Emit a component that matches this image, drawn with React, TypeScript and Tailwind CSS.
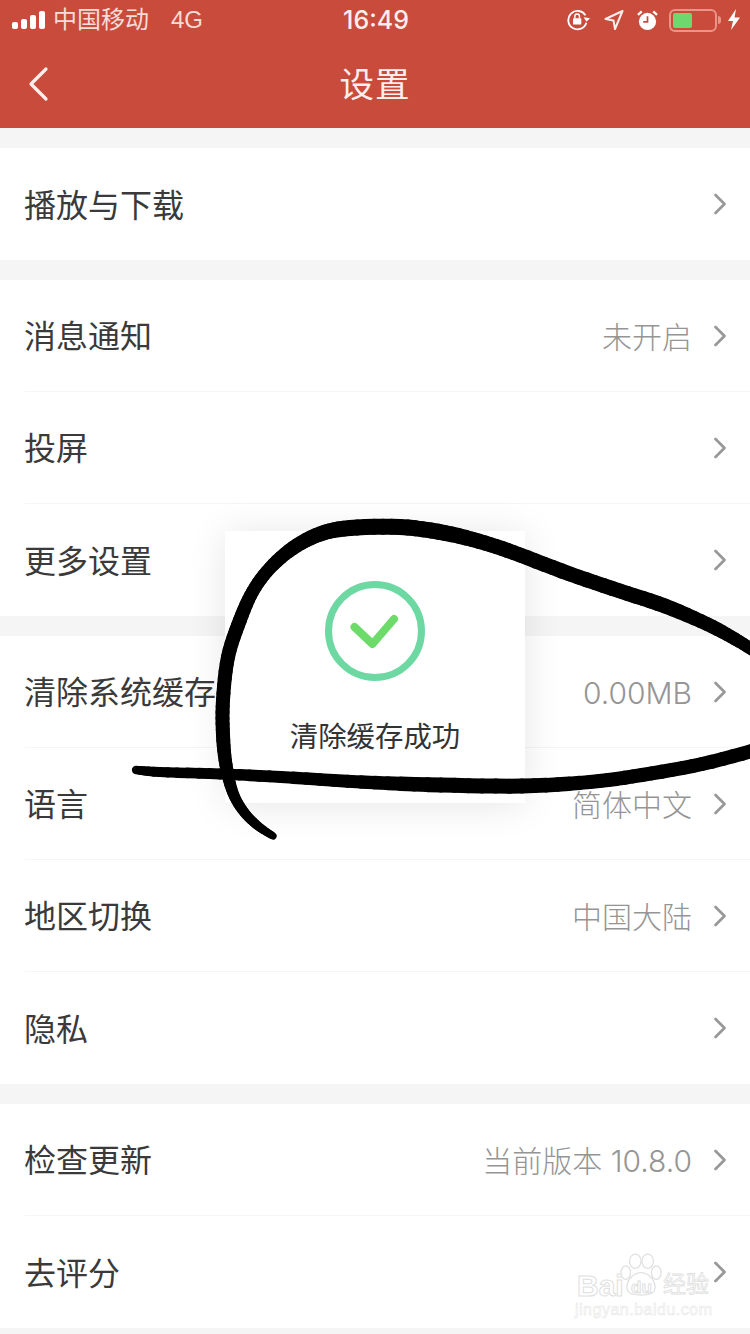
import React from "react";

const FONT = '"Liberation Sans", "Noto Sans CJK SC", sans-serif';
const VALUE_FONT = 'Inter, "Noto Sans CJK SC", sans-serif';

type Row = { label: string; value?: string };
const groups: Row[][] = [
  [{ label: "播放与下载" }],
  [{ label: "消息通知", value: "未开启" }, { label: "投屏" }, { label: "更多设置" }],
  [
    { label: "清除系统缓存", value: "0.00MB" },
    { label: "语言", value: "简体中文" },
    { label: "地区切换", value: "中国大陆" },
    { label: "隐私" },
  ],
  [{ label: "检查更新", value: "当前版本 10.8.0" }, { label: "去评分" }],
];

function Chevron() {
  return (
    <svg width="14" height="24" viewBox="0 0 14 24" fill="none" className="shrink-0">
      <path d="M2.5 3 L11.5 12 L2.5 21" stroke="#999" strokeWidth="2.8" strokeLinecap="round" strokeLinejoin="round" />
    </svg>
  );
}

function SettingRow({ row, last }: { row: Row; last: boolean }) {
  return (
    <div className="h-[112px] pl-[25px]">
      <div className={`h-full flex items-center justify-between pr-[23px] ${last ? "" : "border-b border-[#f5f5f5]"}`}>
        <span className="text-[32px] leading-none text-[#3a3a3a] -ml-[1px] pt-[3px]">{row.label}</span>
        <div className="flex items-center gap-[21px]">
          {row.value && (
            <span className="text-[30px] leading-none font-light text-[#959595] pt-[3px]" style={{ fontFamily: VALUE_FONT }}>
              {row.value}
            </span>
          )}
          <Chevron />
        </div>
      </div>
    </div>
  );
}

function StatusBar() {
  return (
    <div className="h-[40px] grid grid-cols-3 items-center text-white pl-[12px] pr-[9px]">
      <div className="flex items-center">
        <svg width="36" height="20" viewBox="0 0 36 20" fill="white">
          <rect x="0" y="12" width="6" height="7" rx="2" />
          <rect x="9" y="9" width="6" height="10" rx="2" />
          <rect x="18" y="5" width="6" height="14" rx="2" />
          <rect x="27" y="1" width="6" height="18" rx="2" />
        </svg>
        <span className="ml-[5px] text-[24px] leading-none text-[#f6dcd8]">中国移动</span>
        <span className="ml-[22px] text-[24px] leading-none text-[#f6dcd8]">4G</span>
      </div>
      <div className="text-center text-[25px] leading-none font-medium text-[#fbeeec] pr-[1px]" style={{ fontFamily: VALUE_FONT }}>
        16:49
      </div>
      <div className="flex items-center justify-end">
        <svg width="24" height="24" viewBox="0 0 26 24" fill="none">
          <path d="M20 7 A10 10 0 1 0 21 15" stroke="white" strokeWidth="2" />
          <path d="M18 9 L25 10 L21 14 Z" fill="white" />
          <rect x="6.5" y="10" width="9" height="7" rx="1" fill="white" />
          <path d="M8.5 10 V8 a2.5 2.5 0 0 1 5 0 V10" stroke="white" strokeWidth="1.6" />
        </svg>
        <svg width="20" height="22" viewBox="0 0 20 22" fill="none" className="ml-[13px]">
          <path d="M18.5 2 L1.5 10 L9.5 11.5 L11 20 Z" stroke="#fbeeec" strokeWidth="2" strokeLinejoin="round" />
        </svg>
        <svg width="21" height="21" viewBox="0 0 22 22" className="ml-[13px]">
          <circle cx="11" cy="12" r="9" fill="white" />
          <path d="M11 6.5 V12.5 H6.5" stroke="#c94b3b" strokeWidth="1.8" fill="none" />
          <path d="M1 5 L5 1.5 M21 5 L17 1.5" stroke="white" strokeWidth="2.4" />
        </svg>
        <div className="ml-[11px] w-[48px] h-[23px] rounded-[6px] border-2 border-[#eb9489] p-[2px]">
          <div className="h-full w-[19px] rounded-[2px] bg-[#6ed86f]" />
        </div>
        <div className="ml-[1px] w-[3px] h-[8px] rounded-r-full bg-[#eb9489]" />
        <svg width="14" height="22" viewBox="0 0 14 22" className="ml-[6px]">
          <path d="M9 0 L1 12 H6 L4 21 L13 8.5 H7.5 Z" fill="white" />
        </svg>
      </div>
    </div>
  );
}

function Toast() {
  return (
    <div className="absolute left-[225px] top-[531px] w-[300px] h-[272px] bg-white flex flex-col items-center pt-[50px] shadow-[0_2px_36px_rgba(0,0,0,0.1)]">
      <svg width="100" height="100" viewBox="0 0 100 100" fill="none">
        <circle cx="50" cy="50" r="46.5" stroke="#6ed8a3" strokeWidth="7" />
        <path d="M29.5 46 L47.5 63 L69 38" stroke="#6ddb6a" strokeWidth="8" strokeLinecap="round" strokeLinejoin="round" />
      </svg>
      <div className="mt-[40px] text-[28.4px] leading-[32px] text-[#333]">清除缓存成功</div>
    </div>
  );
}

type P = [number, number, number];
const stroke1: P[] = [
  [273, 836, 7], [258, 826, 9], [244, 812, 10], [233, 793, 11], [226, 765, 13], [223, 735, 14], [223, 700, 14],
  [228, 657, 14], [240, 620, 14], [253, 591, 13], [270, 568, 13], [293, 548, 14], [320, 534, 15],
  [350, 528, 16], [400, 527, 16], [445, 533, 16], [485, 543, 15], [520, 555, 15], [570, 574, 15],
  [620, 591, 15], [665, 606, 15], [707, 624, 14], [735, 639, 13], [756, 652, 12],
];
const stroke2: P[] = [
  [136, 770, 8], [160, 772, 10], [220, 774, 11], [281, 777, 12], [361, 782, 13], [441, 785, 15], [522, 786, 15],
  [590, 782, 14], [642, 775, 14], [702, 764, 14], [756, 750, 14],
];

function Ink({ pts }: { pts: P[] }) {
  const segs: React.ReactNode[] = [];
  for (let i = 0; i < pts.length - 1; i++) {
    const p0 = pts[Math.max(i - 1, 0)];
    const p1 = pts[i];
    const p2 = pts[i + 1];
    const p3 = pts[Math.min(i + 2, pts.length - 1)];
    let prev: [number, number] = [p1[0], p1[1]];
    for (let k = 1; k <= 6; k++) {
      const t = k / 6;
      const cr = (a: number, b: number, c: number, d: number) =>
        0.5 * (2 * b + (c - a) * t + (2 * a - 5 * b + 4 * c - d) * t * t + (3 * b - a - 3 * c + d) * t * t * t);
      const x = cr(p0[0], p1[0], p2[0], p3[0]);
      const y = cr(p0[1], p1[1], p2[1], p3[1]);
      const w = p1[2] + (p2[2] - p1[2]) * t;
      segs.push(
        <path key={`${i}-${k}`} d={`M${prev[0]} ${prev[1]} L${x} ${y}`} stroke="#000" strokeWidth={w} strokeLinecap="round" />
      );
      prev = [x, y];
    }
  }
  return <g>{segs}</g>;
}

function InkStrokes() {
  return (
    <svg width="750" height="1334" viewBox="0 0 750 1334" fill="none" className="absolute left-0 top-0 pointer-events-none">
      <Ink pts={stroke1} />
      <Ink pts={stroke2} />
    </svg>
  );
}

function Watermark() {
  return (
    <div className="absolute left-[575px] top-[1252px] w-[136px] h-[68px] text-white [-webkit-text-stroke:1px_#e0e0e0]">
      <svg width="42" height="45" viewBox="0 0 44 46" fill="white" stroke="#e0e0e0" strokeWidth="1.3" className="absolute left-[45px] top-[1px]">
        <ellipse cx="6" cy="20" rx="5" ry="7" />
        <ellipse cx="16" cy="8" rx="6" ry="7.5" />
        <ellipse cx="29" cy="8" rx="6" ry="7.5" />
        <ellipse cx="38" cy="20" rx="5" ry="7" />
        <path d="M22 20 C12 20 5 32 8 39 C11 45 33 45 36 39 C39 32 32 20 22 20 Z" />
      </svg>
      <span className="absolute left-[2px] top-[19px] text-[30px] leading-none font-bold">Bai</span>
      <span className="absolute left-[56px] top-[27px] text-[17px] leading-none font-bold">du</span>
      <span className="absolute left-[88px] top-[21px] text-[23px] leading-none [-webkit-text-stroke:0.8px_#e0e0e0]">经验</span>
      <span className="absolute left-0 top-[50px] text-[16px] leading-none w-[136px] tracking-[0.5px] [-webkit-text-stroke:0.5px_#e4e4e4]">jingyan.baidu.com</span>
    </div>
  );
}

export default function App() {
  return (
    <div className="relative w-[750px] h-[1334px] overflow-hidden bg-[#f5f5f5]" style={{ fontFamily: FONT }}>
      <div className="h-[128px] bg-[#c94b3b]">
        <StatusBar />
        <div className="relative h-[88px] flex items-center justify-center">
          <svg width="24" height="36" viewBox="0 0 24 36" fill="none" className="absolute left-[27px] top-[26px]">
            <path d="M19 3 L4 18 L19 33" stroke="#fbeeec" strokeWidth="3.2" strokeLinecap="round" strokeLinejoin="round" />
          </svg>
          <span className="text-[34.5px] leading-none text-[#fbeeec] tracking-[1px] pt-[2px]">设置</span>
        </div>
      </div>
      <div className="flex flex-col gap-[20px] pt-[20px]">
        {groups.map((g, i) => (
          <div key={i} className="bg-white">
            {g.map((r, j) => (
              <SettingRow key={r.label} row={r} last={j === g.length - 1} />
            ))}
          </div>
        ))}
      </div>
      <Toast />
      <InkStrokes />
      <Watermark />
    </div>
  );
}
